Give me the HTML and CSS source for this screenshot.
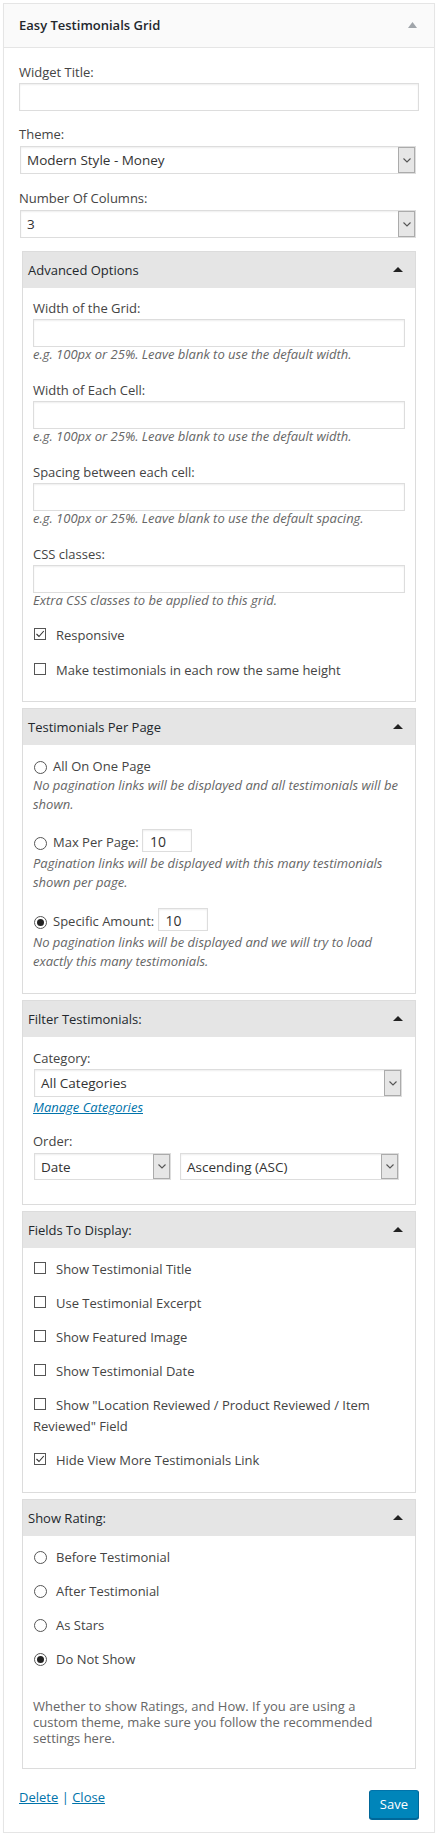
FILE: index.html
```html
<!DOCTYPE html>
<html>
<head>
<meta charset="utf-8">
<title>Easy Testimonials Grid</title>
<link rel="stylesheet" href="styles.css">
</head>
<body>
<div class="widget">
  <div class="widget-top">
    <h3 class="widget-title">Easy Testimonials Grid</h3>
    <svg class="tri-gray" width="9" height="6" viewBox="0 0 9 6"><polygon points="0,6 4.5,0 9,6" fill="#a0a5aa"/></svg>
  </div>
  <div class="widget-inside">
    <div class="field">
      <label class="lbl">Widget Title:</label>
      <div class="input"></div>
    </div>
    <div class="field field-sel">
      <label class="lbl">Theme:</label>
      <div class="select sel-wide"><span class="sel-text">Modern Style - Money</span><span class="sel-btn"><svg width="8" height="5" viewBox="0 0 8 5"><polyline points="0.5,0.5 4,4 7.5,0.5" fill="none" stroke="#555" stroke-width="1.1"/></svg></span></div>
    </div>
    <div class="field field-sel last-top">
      <label class="lbl">Number Of Columns:</label>
      <div class="select sel-wide"><span class="sel-text">3</span><span class="sel-btn"><svg width="8" height="5" viewBox="0 0 8 5"><polyline points="0.5,0.5 4,4 7.5,0.5" fill="none" stroke="#555" stroke-width="1.1"/></svg></span></div>
    </div>

    <div class="box">
      <div class="box-head"><span>Advanced Options</span><svg width="10" height="5" viewBox="0 0 10 5"><polygon points="0,5 5,0 10,5" fill="#222"/></svg></div>
      <div class="box-body adv">
        <div class="group">
          <label class="lbl">Width of the Grid:</label>
          <div class="input"></div>
          <p class="desc">e.g. 100px or 25%. Leave blank to use the default width.</p>
        </div>
        <div class="group">
          <label class="lbl">Width of Each Cell:</label>
          <div class="input"></div>
          <p class="desc">e.g. 100px or 25%. Leave blank to use the default width.</p>
        </div>
        <div class="group">
          <label class="lbl">Spacing between each cell:</label>
          <div class="input"></div>
          <p class="desc">e.g. 100px or 25%. Leave blank to use the default spacing.</p>
        </div>
        <div class="group group-last">
          <label class="lbl">CSS classes:</label>
          <div class="input"></div>
          <p class="desc">Extra CSS classes to be applied to this grid.</p>
        </div>
        <div class="chk-row adv-row"><svg class="cb" width="12" height="12" viewBox="0 0 12 12"><rect x="0.5" y="0.5" width="11" height="11" fill="#fff" stroke="#555"/><polyline points="2.5,6 5,8.5 9.8,3" fill="none" stroke="#333" stroke-width="1.1"/></svg>Responsive</div>
        <div class="chk-row adv-row"><svg class="cb" width="12" height="12" viewBox="0 0 12 12"><rect x="0.5" y="0.5" width="11" height="11" fill="#fff" stroke="#555"/></svg>Make testimonials in each row the same height</div>
      </div>
    </div>

    <div class="box">
      <div class="box-head"><span>Testimonials Per Page</span><svg width="10" height="5" viewBox="0 0 10 5"><polygon points="0,5 5,0 10,5" fill="#222"/></svg></div>
      <div class="box-body perpage">
        <div class="pp-row"><svg class="rb" width="13" height="13" viewBox="0 0 13 13"><circle cx="6.5" cy="6.5" r="6" fill="#fff" stroke="#555"/></svg>All On One Page</div>
        <p class="desc pp-desc">No pagination links will be displayed and all testimonials will be shown.</p>
        <div class="pp-row pp-gap"><svg class="rb" width="13" height="13" viewBox="0 0 13 13"><circle cx="6.5" cy="6.5" r="6" fill="#fff" stroke="#555"/></svg>Max Per Page: <span class="num">10</span></div>
        <p class="desc pp-desc2">Pagination links will be displayed with this many testimonials shown per page.</p>
        <div class="pp-row pp-gap2"><svg class="rb" width="13" height="13" viewBox="0 0 13 13"><circle cx="6.5" cy="6.5" r="6" fill="#fff" stroke="#555"/><circle cx="6.5" cy="6.5" r="3.5" fill="#222"/></svg>Specific Amount: <span class="num">10</span></div>
        <p class="desc pp-desc2">No pagination links will be displayed and we will try to load exactly this many testimonials.</p>
      </div>
    </div>

    <div class="box">
      <div class="box-head"><span>Filter Testimonials:</span><svg width="10" height="5" viewBox="0 0 10 5"><polygon points="0,5 5,0 10,5" fill="#222"/></svg></div>
      <div class="box-body filter">
        <label class="lbl">Category:</label>
        <div class="select sel-cat"><span class="sel-text">All Categories</span><span class="sel-btn"><svg width="8" height="5" viewBox="0 0 8 5"><polyline points="0.5,0.5 4,4 7.5,0.5" fill="none" stroke="#555" stroke-width="1.1"/></svg></span></div>
        <a class="manage" href="#">Manage Categories</a>
        <label class="lbl order-lbl">Order:</label>
        <div class="order-row">
          <div class="select sel-date"><span class="sel-text">Date</span><span class="sel-btn"><svg width="8" height="5" viewBox="0 0 8 5"><polyline points="0.5,0.5 4,4 7.5,0.5" fill="none" stroke="#555" stroke-width="1.1"/></svg></span></div>
          <div class="select sel-asc"><span class="sel-text">Ascending (ASC)</span><span class="sel-btn"><svg width="8" height="5" viewBox="0 0 8 5"><polyline points="0.5,0.5 4,4 7.5,0.5" fill="none" stroke="#555" stroke-width="1.1"/></svg></span></div>
        </div>
      </div>
    </div>

    <div class="box">
      <div class="box-head"><span>Fields To Display:</span><svg width="10" height="5" viewBox="0 0 10 5"><polygon points="0,5 5,0 10,5" fill="#222"/></svg></div>
      <div class="box-body fields">
        <div class="chk-row"><svg class="cb" width="12" height="12" viewBox="0 0 12 12"><rect x="0.5" y="0.5" width="11" height="11" fill="#fff" stroke="#555"/></svg>Show Testimonial Title</div>
        <div class="chk-row"><svg class="cb" width="12" height="12" viewBox="0 0 12 12"><rect x="0.5" y="0.5" width="11" height="11" fill="#fff" stroke="#555"/></svg>Use Testimonial Excerpt</div>
        <div class="chk-row"><svg class="cb" width="12" height="12" viewBox="0 0 12 12"><rect x="0.5" y="0.5" width="11" height="11" fill="#fff" stroke="#555"/></svg>Show Featured Image</div>
        <div class="chk-row"><svg class="cb" width="12" height="12" viewBox="0 0 12 12"><rect x="0.5" y="0.5" width="11" height="11" fill="#fff" stroke="#555"/></svg>Show Testimonial Date</div>
        <div class="chk-row"><svg class="cb" width="12" height="12" viewBox="0 0 12 12"><rect x="0.5" y="0.5" width="11" height="11" fill="#fff" stroke="#555"/></svg>Show "Location Reviewed / Product Reviewed / Item Reviewed" Field</div>
        <div class="chk-row"><svg class="cb" width="12" height="12" viewBox="0 0 12 12"><rect x="0.5" y="0.5" width="11" height="11" fill="#fff" stroke="#555"/><polyline points="2.5,6 5,8.5 9.8,3" fill="none" stroke="#333" stroke-width="1.1"/></svg>Hide View More Testimonials Link</div>
      </div>
    </div>

    <div class="box box-last">
      <div class="box-head"><span>Show Rating:</span><svg width="10" height="5" viewBox="0 0 10 5"><polygon points="0,5 5,0 10,5" fill="#222"/></svg></div>
      <div class="box-body rating">
        <div class="chk-row"><svg class="rb rb-r" width="13" height="13" viewBox="0 0 13 13"><circle cx="6.5" cy="6.5" r="6" fill="#fff" stroke="#555"/></svg>Before Testimonial</div>
        <div class="chk-row"><svg class="rb rb-r" width="13" height="13" viewBox="0 0 13 13"><circle cx="6.5" cy="6.5" r="6" fill="#fff" stroke="#555"/></svg>After Testimonial</div>
        <div class="chk-row"><svg class="rb rb-r" width="13" height="13" viewBox="0 0 13 13"><circle cx="6.5" cy="6.5" r="6" fill="#fff" stroke="#555"/></svg>As Stars</div>
        <div class="chk-row"><svg class="rb rb-r" width="13" height="13" viewBox="0 0 13 13"><circle cx="6.5" cy="6.5" r="6" fill="#fff" stroke="#555"/><circle cx="6.5" cy="6.5" r="3.5" fill="#222"/></svg>Do Not Show</div>
        <p class="note">Whether to show Ratings, and How. If you are using a custom theme, make sure you follow the recommended settings here.</p>
      </div>
    </div>

    <div class="widget-foot">
      <div class="links"><a href="#">Delete</a> | <a href="#">Close</a></div>
      <button class="save" type="button">Save</button>
    </div>
  </div>
</div>
</body>
</html>
```
FILE: styles.css
```css
* { box-sizing: border-box; }
body {
  margin: 0;
  background: #fff;
  font-family: "Open Sans", sans-serif;
  font-size: 13px;
  color: #444;
}
.widget {
  margin: 3px 0 0 3px;
  width: 432px;
  border: 1px solid #e5e5e5;
  box-shadow: 0 1px 1px rgba(0,0,0,0.04);
  background: #fff;
}
.widget-top {
  height: 44px;
  background: #fafafa;
  border-bottom: 1px solid #e5e5e5;
  display: flex;
  align-items: center;
  justify-content: space-between;
  padding: 0 17px 0 15px;
}
.widget-title {
  margin: 0;
  font-size: 13px;
  font-weight: 600;
  line-height: 19px;
  color: #23282d;
}
.tri-gray { display: block; margin-top: -2px; }
.widget-inside {
  padding: 15px 15px 13px;
}
.lbl {
  display: block;
  line-height: 19px;
  margin-bottom: 1px;
}
.field { margin-bottom: 14px; }
.field-sel { margin-bottom: 15px; }
.field-sel .select { margin-top: 2px; }
.last-top { margin-bottom: 13px; }
.input {
  height: 28px;
  border: 1px solid #ddd;
  box-shadow: inset 0 1px 2px rgba(0,0,0,0.07);
  background: #fff;
}
.select {
  display: flex;
  align-items: center;
  height: 28px;
  border: 1px solid #ddd;
  box-shadow: inset 0 1px 2px rgba(0,0,0,0.07);
  background: #fff;
  color: #333;
  font-size: 13.5px;
  padding-left: 6px;
}
.sel-text { flex: 1; white-space: nowrap; }
.sel-btn {
  width: 17px;
  align-self: stretch;
  background: #e6e6e6;
  border: 1px solid #ababab;
  display: flex;
  align-items: center;
  justify-content: center;
}
.sel-btn svg { display: block; }
.sel-wide { width: 396px; margin-left: 1px; }

.box {
  margin: 0 3px 6px;
  border: 1px solid #dcdcdc;
}
.box-last { margin-bottom: 0; }
.box-head {
  height: 36px;
  background: #e5e5e5;
  display: flex;
  align-items: center;
  justify-content: space-between;
  padding: 0 12px 0 5px;
  color: #23282d;
  line-height: 19px;
}
.box-head svg { display: block; margin-top: -2px; }
.box-body { padding: 11px 10px 20px; }

.desc {
  margin: -2px 0 0;
  font-style: italic;
  line-height: 19px;
  color: #666;
}
.group { margin-bottom: 17px; }
.group-last { margin-bottom: 15px; }

.chk-row {
  line-height: 21px;
  margin-bottom: 13px;
}
.chk-row:last-child { margin-bottom: 0; }
.adv-row { margin-bottom: 14px; }
.cb {
  display: inline-block;
  vertical-align: baseline;
  margin: 0 10px 0 1px;
}
.rb {
  display: inline-block;
  vertical-align: -3px;
  margin: 0 6px 0 1px;
}
.rb-r { vertical-align: -2px; margin-right: 9px; }

.perpage { padding: 12px 10px 22px; }
.pp-row { line-height: 19px; }
.pp-desc { margin-top: 0; }
.pp-gap { margin-top: 15px; }
.pp-gap2 { margin-top: 16px; }
.pp-desc2 { margin-top: 2px; }
.num {
  display: inline-block;
  width: 50px;
  height: 23px;
  border: 1px solid #ddd;
  box-shadow: inset 0 1px 2px rgba(0,0,0,0.07);
  padding: 3px 7px 0;
  line-height: 18px;
  font-size: 14px;
  color: #333;
  vertical-align: baseline;
}

.filter { padding: 12px 10px 24px; }
.sel-cat { width: 368px; margin-left: 1px; margin-top: 1px; }
.manage {
  display: block;
  width: max-content;
  margin-top: 1px;
  line-height: 19px;
  font-style: italic;
  color: #0073aa;
  text-decoration: underline;
}
.order-lbl { margin-top: 15px; }
.order-row {
  display: flex;
  gap: 9px;
  margin-top: 2px;
  margin-left: 1px;
}
.order-row .select { height: 27px; }
.sel-date { width: 137px; }
.sel-asc { width: 219px; }

.fields { padding: 11px 10px 21px; }
.rating { padding: 11px 10px 22px; }
.note {
  margin: 28px 0 0;
  padding-right: 8px;
  line-height: 16px;
  color: #666;
}

.widget-foot {
  display: flex;
  justify-content: space-between;
  align-items: flex-start;
  margin-top: 19px;
}
.links {
  line-height: 19px;
  color: #0073aa;
}
.links a { color: #0073aa; text-decoration: underline; }
.save {
  margin-top: 2px;
  height: 29px;
  padding: 0 10px;
  background: #0085ba;
  border: 1px solid #0073aa;
  border-color: #0073aa #006799 #006799;
  border-radius: 3px;
  box-shadow: 0 1px 0 #006799;
  color: #fff;
  font-family: "Open Sans", sans-serif;
  font-size: 13px;
  line-height: 27px;
}
```
